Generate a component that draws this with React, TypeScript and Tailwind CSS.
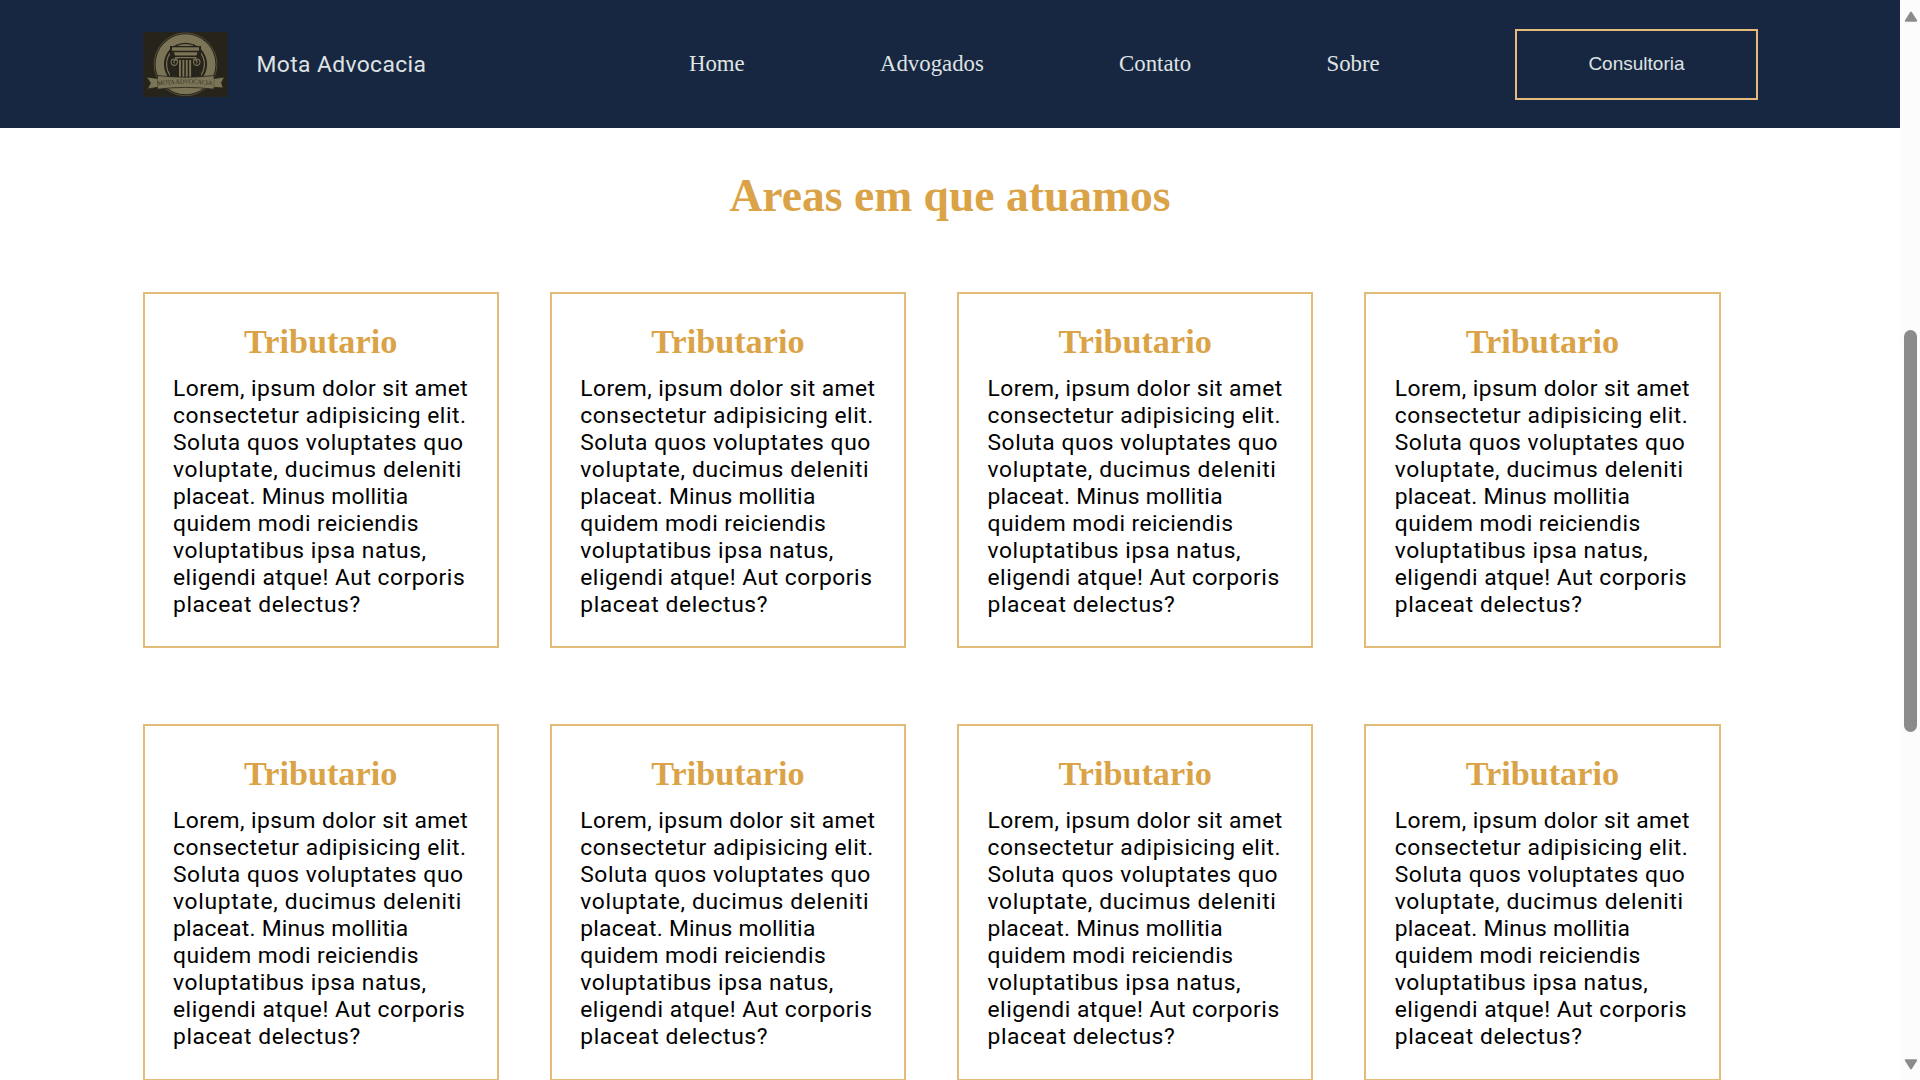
import React from 'react';

type Line = { text: string; spacing: string };

const lines: Line[] = [
  { text: 'Lorem, ipsum dolor sit amet', spacing: 'tracking-[0.43px]' },
  { text: 'consectetur adipisicing elit.', spacing: 'tracking-[0.54px]' },
  { text: 'Soluta quos voluptates quo', spacing: 'tracking-[0.55px]' },
  { text: 'voluptate, ducimus deleniti', spacing: 'tracking-[0.67px]' },
  { text: 'placeat. Minus mollitia', spacing: 'tracking-[0.26px]' },
  { text: 'quidem modi reiciendis', spacing: 'tracking-[0.44px]' },
  { text: 'voluptatibus ipsa natus,', spacing: 'tracking-[0.57px]' },
  { text: 'eligendi atque! Aut corporis', spacing: 'tracking-[0.52px]' },
  { text: 'placeat delectus?', spacing: 'tracking-[0.62px]' },
];

const areas = Array.from({ length: 8 }, (_, id) => ({ id, title: 'Tributario' }));

function Logo() {
  return (
    <svg viewBox="0 0 85 65" className="h-[65px] w-[85px] shrink-0" aria-label="Mota Advocacia">
      <rect width="85" height="65" fill="#26231a" />
      <circle cx="42.5" cy="32.3" r="31.4" fill="none" stroke="#57523c" strokeWidth="0.9" />
      <circle cx="42.5" cy="32.3" r="30" fill="#7b7457" />
      <circle cx="42.5" cy="32.3" r="21.6" fill="#26231a" />
      <circle cx="42.5" cy="32.3" r="18.9" fill="none" stroke="#7b7457" strokeWidth="1.2" />
      <rect x="27" y="14" width="31" height="36" fill="#26231a" />
      <path d="M35 13.4Q42.5 11.5 50 13.4" fill="none" stroke="#7b7457" strokeWidth="0.9" />
      <g fill="#7b7457">
        <rect x="29" y="15.3" width="27" height="3.4" />
        <path d="M31 20.3H54.5L53.5 23.6H32Z" />
        <rect x="32" y="25" width="21.5" height="1.2" />
        <rect x="36" y="28" width="1.9" height="17" />
        <rect x="39.4" y="28" width="1.9" height="17" />
        <rect x="42.8" y="28" width="1.9" height="17" />
        <rect x="46.2" y="28" width="1.9" height="17" />
      </g>
      <g fill="none" stroke="#7b7457" strokeWidth="1.1">
        <path d="M35 27H31.8A3.2 3.2 0 1 0 34.4 30.3A1.8 1.8 0 1 0 31.6 31.2" />
        <path d="M50 27H53.2A3.2 3.2 0 1 1 50.6 30.3A1.8 1.8 0 1 1 53.4 31.2" />
      </g>
      <path
        d="M3.5 45L14.5 46.5V43.5Q42.5 47 71 43.5V46.5L81.5 45L78.5 50.7L80.3 56L71 55.3V57.2Q42.5 53.6 14.5 57.2V55.3L4.5 57L7.5 51Z"
        fill="#7b7457"
        stroke="#26231a"
        strokeWidth="0.8"
      />
      <path d="M14.5 46V55.5M71 46V55.5" stroke="#4b4633" strokeWidth="0.5" />
      <path id="ribbon" d="M14.3 53.6Q42 49.6 70 53.6" fill="none" />
      <text fontFamily="Liberation Serif, serif" fontSize="6.6" fill="#3a3526">
        <textPath href="#ribbon" startOffset="0" textLength="55">
          MOTA ADVOCACIA
        </textPath>
      </text>
    </svg>
  );
}

function Header() {
  return (
    <header className="flex h-32 shrink-0 items-center bg-[#182741] pl-[143px] text-[#dfe3e3]">
      <Logo />
      <span className="ml-[28.5px] w-[432.5px] whitespace-nowrap font-['Roboto',sans-serif] text-[22.8px] leading-[27px] tracking-[0.4px]">
        Mota Advocacia
      </span>
      <nav className="flex w-[826px] items-center justify-between font-['Liberation_Serif',serif] text-[22.8px] leading-[26px]">
        <a>Home</a>
        <a>Advogados</a>
        <a>Contato</a>
        <a>Sobre</a>
        <button className="-mr-[243px] h-[71px] w-[243px] border-2 border-[#e6ba7a] font-['Liberation_Sans',sans-serif] text-[19px]">
          Consultoria
        </button>
      </nav>
    </header>
  );
}

function AreaCard({ title }: { title: string }) {
  return (
    <article className="border-2 border-[#e3bb79] px-[28px] pt-[28px]">
      <h2 className="text-center font-['Liberation_Serif',serif] text-[34.2px] font-bold leading-[39px] text-[#dba347]">
        {title}
      </h2>
      <p className="mt-[14px] pl-[0.5px] whitespace-nowrap font-['Roboto',sans-serif] text-[22.8px] leading-[27px] text-black">
        {lines.map(({ text, spacing }) => (
          <span key={text} className={`block ${spacing}`}>
            {text}
          </span>
        ))}
      </p>
    </article>
  );
}

function Scrollbar() {
  return (
    <div className="flex h-full w-5 shrink-0 flex-col items-center bg-[#fcfcfc] pr-px pl-[2px]">
      <svg viewBox="0 0 14 12" className="mt-[11px] h-3 w-3.5 shrink-0">
        <path d="M7 1.5L12.3 9.8H1.7Z" fill="#8b8b8b" stroke="#8b8b8b" strokeWidth="1.8" strokeLinejoin="round" />
      </svg>
      <div className="mt-[307px] h-[402px] w-[13px] shrink-0 rounded-full bg-[#8b8b8b]" />
      <svg viewBox="0 0 14 12" className="mt-[327px] h-3 w-3.5 shrink-0">
        <path d="M7 9.5L12.3 1.2H1.7Z" fill="#8b8b8b" stroke="#8b8b8b" strokeWidth="1.8" strokeLinejoin="round" />
      </svg>
    </div>
  );
}

export default function App() {
  return (
    <div className="flex h-[1080px] w-[1920px] overflow-hidden bg-white">
      <div className="flex h-full w-[1900px] flex-col overflow-hidden">
        <Header />
        <main className="px-[142.5px]">
          <h1 className="mt-[42px] text-center font-['Liberation_Serif',serif] text-[45.6px] font-bold leading-[52px] text-[#dba347]">
            Areas em que atuamos
          </h1>
          <section className="mt-[69.75px] grid w-[1578px] auto-rows-[356.5px] grid-cols-4 gap-x-[51px] gap-y-[76px]">
            {areas.map(({ id, title }) => (
              <AreaCard key={id} title={title} />
            ))}
          </section>
        </main>
      </div>
      <Scrollbar />
    </div>
  );
}
